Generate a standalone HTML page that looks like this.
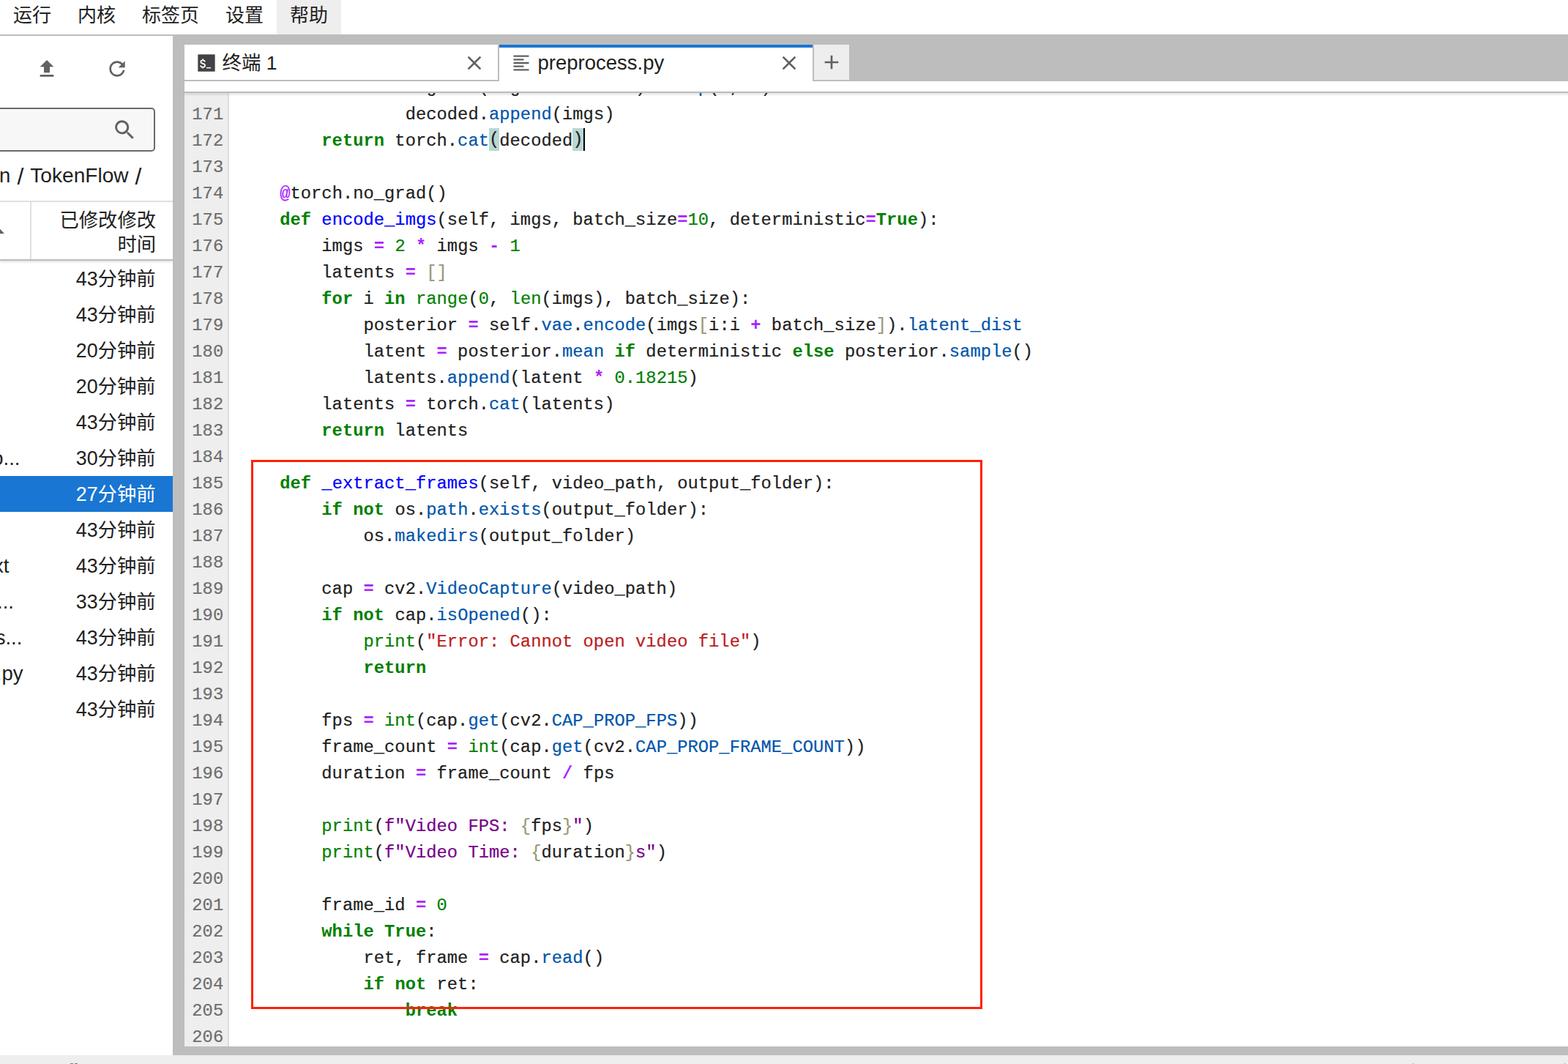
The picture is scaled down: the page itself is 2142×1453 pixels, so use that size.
<!DOCTYPE html>
<html lang="zh">
<head>
<meta charset="utf-8">
<title>JupyterLab</title>
<style>
*{box-sizing:border-box;margin:0;padding:0}
html,body{width:2142px;height:1453px;overflow:hidden;background:#fff}
body{position:relative;font-family:"Liberation Sans",sans-serif;font-size:26px;color:#212121}
.abs{position:absolute}
/* menu */
#menu{left:0;top:0;width:2142px;height:47px;background:#fff}
#menu .mi{position:absolute;top:0;height:47px;line-height:43px;font-size:26px;color:#212121;white-space:nowrap}
#menuline{left:0;top:47px;width:2142px;height:2px;background:#bdbdbd}
/* left panel */
#left{left:0;top:49px;width:236px;height:1392px;background:#fff;overflow:hidden}
#search{left:-10px;top:98px;width:222px;height:60px;border:2px solid #6b6b6b;border-radius:5px;background:#f7f7f7}
#crumb{left:-1px;top:173px;font-size:27.5px;line-height:36px;white-space:nowrap;color:#212121}
#hdr{left:0;top:225px;width:236px;height:82px;border-top:2px solid #e0e0e0;border-bottom:2px solid #bdbdbd;box-shadow:0 2px 3px rgba(0,0,0,.12);background:#fff}
#hdr .sep{position:absolute;left:41px;top:0;width:2px;height:78px;background:#e0e0e0}
#hdr .t{position:absolute;right:22.9px;top:8.5px;text-align:right;line-height:33px;font-size:26.33px;color:#212121;white-space:nowrap}
.row{position:absolute;left:0;width:236px;height:49px;line-height:51.4px;font-size:26px;color:#212121;white-space:nowrap}
.row .tm{position:absolute;right:23.4px;top:0;font-size:26.8px}
.row .nm{position:absolute;top:-1px;text-align:right;font-size:27.5px}
.row.sel{background:#1976d2;color:#fff}
/* dock */
#dock{left:236px;top:49px;width:1906px;height:1392px;background:#bdbdbd}
#tab1{left:252px;top:61px;width:430px;height:50px;background:#fff;border-right:2px solid #bdbdbd;border-bottom:2px solid #bdbdbd}
#tab2{left:682px;top:61px;width:428px;height:52px;background:#fff;border-top:4px solid #1976d2}
#plus{left:1112px;top:61px;width:48px;height:48px;background:#eee}
.tablabel{position:absolute;font-size:27.5px;line-height:36px;white-space:nowrap;color:#212121}
#content{left:252px;top:111px;width:1890px;height:1318px;background:#fff}
#tbline{left:252px;top:125px;width:1890px;height:2px;background:#bbb;box-shadow:0 2px 3px rgba(0,0,0,.16)}
#editor{left:252px;top:126px;width:1890px;height:1303px;overflow:hidden;background:#fff}
#gutter{position:absolute;left:0;top:0;width:61px;height:1303px;background:#eee;border-right:2px solid #ddd}
#status{left:0;top:1441px;width:2142px;height:12px;background:#eee}

/* code */
.ln,.cl{position:absolute;height:36px;line-height:39.2px;font-family:"Liberation Mono",monospace;font-size:23.82px;white-space:pre}
.ln{left:0;width:53.2px;text-align:right;color:#6e6e6e;-webkit-text-stroke:0.2px}
.cl{left:73px;color:#212121;-webkit-text-stroke:0.2px}
.cl i{font-style:normal}
.cl b{color:#008000;font-weight:bold;-webkit-text-stroke:0}
.cl .d{color:#0000ff}.cl .p{color:#0055aa}.cl .n{color:#008000}.cl .o{color:#aa22ff;font-weight:bold;-webkit-text-stroke:0}
.cl .s{color:#ba2121}.cl .s2{color:#770088}.cl .b{color:#999977}.cl .m{color:#aa22ff}
.cl u{text-decoration:none;background:#b9d8d3;display:inline-block;height:31px;line-height:31px;vertical-align:top;margin-top:1.8px}
.cl s{display:inline-block;width:2px;height:31px;background:#000;vertical-align:top;margin-top:1.8px;margin-right:-2px}
#redbox{left:343px;top:628px;width:999px;height:750px;border:3px solid #ff2100}
#crumb .sl{position:absolute;top:1.3px;font-size:32px;transform:none}
.cj{font-family:"Liberation Sans","Noto Sans CJK SC",sans-serif}
.tm .cj{font-size:26.35px}
</style>
</head>
<body>
<div id="menu" class="abs">
  <div class="mi" style="left:378px;width:88px;background:#eee"></div>
  <div class="mi" style="left:18px"><span class="cj">运行</span></div>
  <div class="mi" style="left:106px"><span class="cj">内核</span></div>
  <div class="mi" style="left:194px"><span class="cj">标签页</span></div>
  <div class="mi" style="left:308px"><span class="cj">设置</span></div>
  <div class="mi" style="left:396px"><span class="cj">帮助</span></div>
</div>
<div id="menuline" class="abs"></div>

<div id="left" class="abs">
  <div id="search" class="abs"></div>
  <div id="crumb" class="abs">n<span class="sl" style="left:24.4px">/</span><span style="position:absolute;left:42.3px;font-size:28.1px">TokenFlow</span><span class="sl" style="left:185.5px">/</span></div>
  <div id="hdr" class="abs"><div class="sep"></div><div class="t"><span class="cj">已修改修改</span><br><span class="cj">时间</span></div></div>
  <div class="row" style="top:307px"><span class="tm">43<span class="cj">分钟前</span></span></div>
<div class="row" style="top:356px"><span class="tm">43<span class="cj">分钟前</span></span></div>
<div class="row" style="top:405px"><span class="tm">20<span class="cj">分钟前</span></span></div>
<div class="row" style="top:454px"><span class="tm">20<span class="cj">分钟前</span></span></div>
<div class="row" style="top:503px"><span class="tm">43<span class="cj">分钟前</span></span></div>
<div class="row" style="top:552px"><span class="nm" style="right:208.5px">o...</span><span class="tm">30<span class="cj">分钟前</span></span></div>
<div class="row sel" style="top:601px"><span class="tm">27<span class="cj">分钟前</span></span></div>
<div class="row" style="top:650px"><span class="tm">43<span class="cj">分钟前</span></span></div>
<div class="row" style="top:699px"><span class="nm" style="right:223.5px">xt</span><span class="tm">43<span class="cj">分钟前</span></span></div>
<div class="row" style="top:748px"><span class="nm" style="right:217px">...</span><span class="tm">33<span class="cj">分钟前</span></span></div>
<div class="row" style="top:797px"><span class="nm" style="right:205.6px">s...</span><span class="tm">43<span class="cj">分钟前</span></span></div>
<div class="row" style="top:846px"><span class="nm" style="right:204.5px">.py</span><span class="tm">43<span class="cj">分钟前</span></span></div>
<div class="row" style="top:895px"><span class="tm">43<span class="cj">分钟前</span></span></div>
</div>

<div id="dock" class="abs"></div>
<div id="tab1" class="abs"><div class="tablabel" style="left:51.5px;top:7px;font-size:26.5px"><span class="cj">终端 1</span></div></div>
<div id="tab2" class="abs"><div class="tablabel" style="left:52.5px;top:3.4px">preprocess.py</div></div>
<div id="plus" class="abs"></div>
<div id="content" class="abs"></div>
<div id="editor" class="abs">
  <div id="gutter"></div>
  <div class="cl" style="top:-26.5px">                imgs <i class="o">=</i> (imgs <i class="o">/</i> <i class="n">2</i> <i class="o">+</i> <i class="n">0.5</i>).<i class="p">clamp</i>(<i class="n">0</i>, <i class="n">1</i>)</div>
<div class="ln" style="top:11px">171</div><div class="cl" style="top:11px">                decoded.<i class="p">append</i>(imgs)</div>
<div class="ln" style="top:47px">172</div><div class="cl" style="top:47px">        <b>return</b> torch.<i class="p">cat</i><u>(</u>decoded<u>)</u><s></s></div>
<div class="ln" style="top:83px">173</div><div class="cl" style="top:83px"></div>
<div class="ln" style="top:119px">174</div><div class="cl" style="top:119px">    <i class="m">@</i>torch.no_grad()</div>
<div class="ln" style="top:155px">175</div><div class="cl" style="top:155px">    <b>def</b> <i class="d">encode_imgs</i>(self, imgs, batch_size<i class="o">=</i><i class="n">10</i>, deterministic<i class="o">=</i><b>True</b>):</div>
<div class="ln" style="top:191px">176</div><div class="cl" style="top:191px">        imgs <i class="o">=</i> <i class="n">2</i> <i class="o">*</i> imgs <i class="o">-</i> <i class="n">1</i></div>
<div class="ln" style="top:227px">177</div><div class="cl" style="top:227px">        latents <i class="o">=</i> <i class="b">[</i><i class="b">]</i></div>
<div class="ln" style="top:263px">178</div><div class="cl" style="top:263px">        <b>for</b> i <b>in</b> <i class="n">range</i>(<i class="n">0</i>, <i class="n">len</i>(imgs), batch_size):</div>
<div class="ln" style="top:299px">179</div><div class="cl" style="top:299px">            posterior <i class="o">=</i> self.<i class="p">vae</i>.<i class="p">encode</i>(imgs<i class="b">[</i>i:i <i class="o">+</i> batch_size<i class="b">]</i>).<i class="p">latent_dist</i></div>
<div class="ln" style="top:335px">180</div><div class="cl" style="top:335px">            latent <i class="o">=</i> posterior.<i class="p">mean</i> <b>if</b> deterministic <b>else</b> posterior.<i class="p">sample</i>()</div>
<div class="ln" style="top:371px">181</div><div class="cl" style="top:371px">            latents.<i class="p">append</i>(latent <i class="o">*</i> <i class="n">0.18215</i>)</div>
<div class="ln" style="top:407px">182</div><div class="cl" style="top:407px">        latents <i class="o">=</i> torch.<i class="p">cat</i>(latents)</div>
<div class="ln" style="top:443px">183</div><div class="cl" style="top:443px">        <b>return</b> latents</div>
<div class="ln" style="top:479px">184</div><div class="cl" style="top:479px"></div>
<div class="ln" style="top:515px">185</div><div class="cl" style="top:515px">    <b>def</b> <i class="d">_extract_frames</i>(self, video_path, output_folder):</div>
<div class="ln" style="top:551px">186</div><div class="cl" style="top:551px">        <b>if</b> <b>not</b> os.<i class="p">path</i>.<i class="p">exists</i>(output_folder):</div>
<div class="ln" style="top:587px">187</div><div class="cl" style="top:587px">            os.<i class="p">makedirs</i>(output_folder)</div>
<div class="ln" style="top:623px">188</div><div class="cl" style="top:623px"></div>
<div class="ln" style="top:659px">189</div><div class="cl" style="top:659px">        cap <i class="o">=</i> cv2.<i class="p">VideoCapture</i>(video_path)</div>
<div class="ln" style="top:695px">190</div><div class="cl" style="top:695px">        <b>if</b> <b>not</b> cap.<i class="p">isOpened</i>():</div>
<div class="ln" style="top:731px">191</div><div class="cl" style="top:731px">            <i class="n">print</i>(<i class="s">"Error: Cannot open video file"</i>)</div>
<div class="ln" style="top:767px">192</div><div class="cl" style="top:767px">            <b>return</b></div>
<div class="ln" style="top:803px">193</div><div class="cl" style="top:803px"></div>
<div class="ln" style="top:839px">194</div><div class="cl" style="top:839px">        fps <i class="o">=</i> <i class="n">int</i>(cap.<i class="p">get</i>(cv2.<i class="p">CAP_PROP_FPS</i>))</div>
<div class="ln" style="top:875px">195</div><div class="cl" style="top:875px">        frame_count <i class="o">=</i> <i class="n">int</i>(cap.<i class="p">get</i>(cv2.<i class="p">CAP_PROP_FRAME_COUNT</i>))</div>
<div class="ln" style="top:911px">196</div><div class="cl" style="top:911px">        duration <i class="o">=</i> frame_count <i class="o">/</i> fps</div>
<div class="ln" style="top:947px">197</div><div class="cl" style="top:947px"></div>
<div class="ln" style="top:983px">198</div><div class="cl" style="top:983px">        <i class="n">print</i>(<i class="s2">f"Video FPS: </i><i class="b">{</i>fps<i class="b">}</i><i class="s2">"</i>)</div>
<div class="ln" style="top:1019px">199</div><div class="cl" style="top:1019px">        <i class="n">print</i>(<i class="s2">f"Video Time: </i><i class="b">{</i>duration<i class="b">}</i><i class="s2">s"</i>)</div>
<div class="ln" style="top:1055px">200</div><div class="cl" style="top:1055px"></div>
<div class="ln" style="top:1091px">201</div><div class="cl" style="top:1091px">        frame_id <i class="o">=</i> <i class="n">0</i></div>
<div class="ln" style="top:1127px">202</div><div class="cl" style="top:1127px">        <b>while</b> <b>True</b>:</div>
<div class="ln" style="top:1163px">203</div><div class="cl" style="top:1163px">            ret, frame <i class="o">=</i> cap.<i class="p">read</i>()</div>
<div class="ln" style="top:1199px">204</div><div class="cl" style="top:1199px">            <b>if</b> <b>not</b> ret:</div>
<div class="ln" style="top:1235px">205</div><div class="cl" style="top:1235px">                <b>break</b></div>
<div class="ln" style="top:1271px">206</div><div class="cl" style="top:1271px"></div>
</div>
<div id="tbline" class="abs"></div>
<div id="status" class="abs"></div>
<div id="redbox" class="abs"></div>

<svg class="abs" style="left:48px;top:78px" width="32" height="32" viewBox="0 0 24 24"><path fill="#616161" d="M9 16h6v-6h4l-7-7-7 7h4zm-4 2h14v2H5z"/></svg>
<svg class="abs" style="left:144px;top:78px" width="32" height="32" viewBox="0 0 18 18"><path fill="#616161" d="M9 13.5c-2.49 0-4.5-2.01-4.5-4.5S6.51 4.5 9 4.5c1.24 0 2.36.52 3.17 1.33L10 8h5V3l-1.76 1.76C12.15 3.68 10.66 3 9 3 5.69 3 3.01 5.69 3.01 9S5.69 15 9 15c2.97 0 5.43-2.16 5.9-5h-1.52c-.46 2-2.24 3.5-4.38 3.5z"/></svg>
<svg class="abs" style="left:154px;top:161px" width="32" height="32" viewBox="0 0 18 18"><path fill="#616161" d="M12.1,10.9h-0.7l-0.2-0.2c0.8-0.9,1.3-2.2,1.3-3.5c0-3-2.4-5.4-5.4-5.4S1.8,4.2,1.8,7.1s2.4,5.4,5.4,5.4 c1.3,0,2.5-0.5,3.5-1.3l0.2,0.2v0.7l4.1,4.1l1.2-1.2L12.1,10.9z M7.1,10.9c-2.1,0-3.7-1.7-3.7-3.7s1.7-3.7,3.7-3.7s3.7,1.7,3.7,3.7 S9.2,10.9,7.1,10.9z"/></svg>
<svg class="abs" style="left:268px;top:72px" width="28" height="28" viewBox="0 0 24 24"><rect x="2" y="2" width="20" height="20" fill="#424242"/><path d="M10.3 10.7C10.1 9.4 9.2 8.8 7.8 8.8C6.3 8.8 5.4 9.6 5.4 10.7C5.4 11.9 6.3 12.4 7.8 12.8C9.4 13.2 10.4 13.8 10.4 15C10.4 16.2 9.4 16.9 7.8 16.9C6.3 16.9 5.3 16.2 5.1 14.9" fill="none" stroke="#fff" stroke-width="1.5"/><path d="M7.9 6.9V8.9M7.9 16.8V18.4" stroke="#fff" stroke-width="1.1"/><rect x="12" y="17.05" width="5.3" height="1.25" fill="#fff"/></svg>
<svg class="abs" style="left:698px;top:72px" width="28" height="28" viewBox="0 0 24 24"><path fill="#616161" d="M15 15H3v2h12v-2zm0-8H3v2h12V7zM3 13h18v-2H3v2zm0 8h18v-2H3v2zM3 3v2h18V3H3z"/></svg>
<svg class="abs" style="left:632px;top:70px" width="32" height="32" viewBox="0 0 24 24"><path fill="#616161" d="M19 6.41L17.59 5 12 10.59 6.41 5 5 6.41 10.59 12 5 17.59 6.41 19 12 13.41 17.59 19 19 17.59 13.41 12z"/></svg>
<svg class="abs" style="left:1062px;top:70px" width="32" height="32" viewBox="0 0 24 24"><path fill="#616161" d="M19 6.41L17.59 5 12 10.59 6.41 5 5 6.41 10.59 12 5 17.59 6.41 19 12 13.41 17.59 19 19 17.59 13.41 12z"/></svg>
<svg class="abs" style="left:1120px;top:69px" width="32" height="32" viewBox="0 0 24 24"><path fill="#616161" d="M19 13h-6v6h-2v-6H5v-2h6V5h2v6h6v2z"/></svg>
<svg class="abs" style="left:0;top:312px" width="8" height="8" viewBox="0 0 8 8"><path fill="#616161" d="M0 0.7L5.9 7H0z"/></svg>
<div class="abs" style="left:96px;top:1452px;width:4px;height:1px;background:#7a7a7a"></div><div class="abs" style="left:102px;top:1452px;width:4px;height:1px;background:#7a7a7a"></div><div class="abs" style="left:1930px;top:1452px;width:1px;height:1px;background:#888"></div><div class="abs" style="left:2137px;top:1452px;width:1px;height:1px;background:#888"></div>
<!--OVERLAY-->
</body>
</html>
